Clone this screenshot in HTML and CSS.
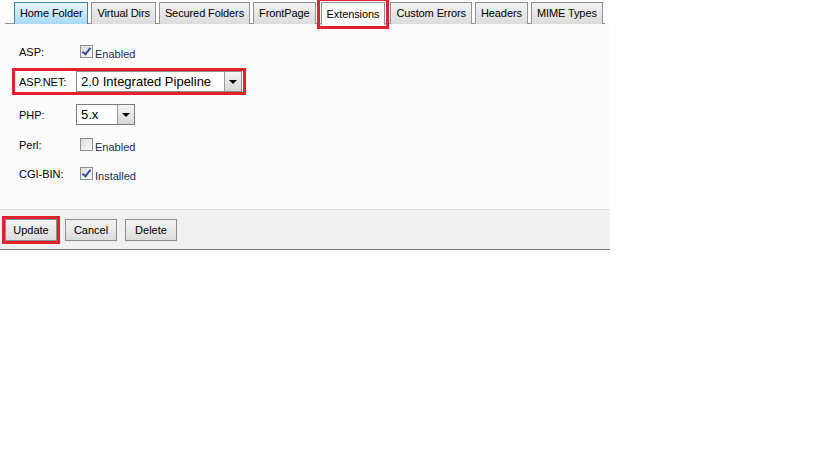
FILE: index.html
```html
<!DOCTYPE html>
<html lang="en">
<head>
    <meta charset="UTF-8">
    <title>Site Extensions</title>
    <link rel="stylesheet" href="styles.css">
</head>
<body>
    <div class="panel">
        <ul class="tabs">
            <li class="tab hover">Home Folder</li>
            <li class="tab">Virtual Dirs</li>
            <li class="tab">Secured Folders</li>
            <li class="tab">FrontPage</li>
            <li class="tab active mark">Extensions</li>
            <li class="tab">Custom Errors</li>
            <li class="tab">Headers</li>
            <li class="tab">MIME Types</li>
        </ul>
        <div class="content">
            <div class="row r-asp">
                <span class="lbl">ASP:</span>
                <label class="chk"><span class="box checked"></span>Enabled</label>
            </div>
            <div class="row r-net mark">
                <span class="lbl">ASP.NET:</span>
                <div class="select wide">
                    <span class="val">2.0 Integrated Pipeline</span>
                    <span class="arrow"></span>
                </div>
            </div>
            <div class="row r-php">
                <span class="lbl">PHP:</span>
                <div class="select narrow">
                    <span class="val">5.x</span>
                    <span class="arrow"></span>
                </div>
            </div>
            <div class="row r-perl">
                <span class="lbl">Perl:</span>
                <label class="chk"><span class="box"></span>Enabled</label>
            </div>
            <div class="row r-cgi">
                <span class="lbl">CGI-BIN:</span>
                <label class="chk"><span class="box checked"></span>Installed</label>
            </div>
        </div>
        <div class="footer">
            <button class="btn mark">Update</button>
            <button class="btn">Cancel</button>
            <button class="btn">Delete</button>
        </div>
    </div>
</body>
</html>
```

FILE: styles.css
```css
body {
    margin: 0;
    background: #ffffff;
    font-family: "Liberation Sans", Arial, sans-serif;
    font-size: 11px;
    color: #000;
}

.panel {
    width: 610px;
}

.tabs {
    list-style: none;
    margin: 0;
    padding: 2px 0 0 14px;
    display: flex;
    gap: 3px;
    position: relative;
    height: 22px;
}

.tabs::after {
    content: "";
    position: absolute;
    left: 5px;
    right: 5px;
    bottom: 0;
    height: 1px;
    background: #919191;
}

.tab {
    box-sizing: border-box;
    height: 22px;
    padding: 0 5px;
    line-height: 20px;
    border: 1px solid #919191;
    border-bottom: none;
    background: linear-gradient(#f2f2f2, #dcdcdc);
    font-size: 11px;
    letter-spacing: -0.1px;
    white-space: nowrap;
    position: relative;
    z-index: 1;
}

.tab.hover {
    border-color: #3c7fb1;
    background: linear-gradient(#eaf6fd, #a7d9f5);
}

.tab.active {
    background: #fcfcfc;
    height: 23px;
    margin: 0 2px;
    padding: 1px 5px 0;
}

.mark {
    outline: 3px solid #e5202e;
    outline-offset: 0;
}

.tab.mark {
    outline-offset: 1px;
}

.content {
    background: #fcfcfc;
    height: 186px;
    padding-top: 20px;
    box-sizing: border-box;
    border-bottom: 1px solid #dcdcdc;
}

.row {
    display: flex;
    align-items: center;
    padding-left: 19px;
}

.lbl {
    width: 57px;
    font-size: 11px;
}

.r-asp { height: 16px; }
.r-net { height: 21px; margin: 11px 0 0 15px; padding-left: 4px; width: 224px; }
.r-php { height: 21px; margin-top: 12px; }
.r-perl { height: 16px; margin-top: 12px; }
.r-cgi { height: 16px; margin-top: 13px; }

.chk {
    display: flex;
    align-items: flex-end;
    font-size: 11px;
    color: #1e2a4a;
    padding-left: 4px;
}

.box {
    box-sizing: border-box;
    width: 13px;
    height: 13px;
    border: 1px solid #8f8f8f;
    background: linear-gradient(135deg, #dcdcdc, #fbfbfb);
    margin-right: 2px;
    margin-bottom: 2px;
    position: relative;
}

.box.checked::after {
    content: "";
    position: absolute;
    left: 3px;
    top: 0px;
    width: 3px;
    height: 7px;
    border-right: 2px solid #34509c;
    border-bottom: 2px solid #34509c;
    transform: rotate(38deg);
}

.select {
    box-sizing: border-box;
    display: flex;
    height: 21px;
    border: 1px solid #7a7a7a;
    background: #fff;
    font-size: 13px;
    align-items: stretch;
}

.select.wide { width: 166px; border-color: #8c8c8c; }
.select.narrow { width: 59px; }

.val {
    flex: 1;
    padding-left: 4px;
    line-height: 19px;
    white-space: nowrap;
}

.arrow {
    width: 16px;
    border-left: 1px solid #9a9a9a;
    background: linear-gradient(#f4f4f4, #d6d6d6);
    position: relative;
}

.arrow::after {
    content: "";
    position: absolute;
    left: 4px;
    top: 8px;
    border-left: 4px solid transparent;
    border-right: 4px solid transparent;
    border-top: 4px solid #000;
}

.footer {
    background: #f0f0f0;
    height: 40px;
    box-sizing: border-box;
    padding: 9px 0 0 5px;
    border-bottom: 1px solid #7a7a7a;
    display: flex;
    gap: 8px;
    align-items: flex-start;
}

.btn {
    box-sizing: border-box;
    height: 22px;
    padding: 0 6px;
    border: 1px solid #8c8c8c;
    border-radius: 0;
    background: linear-gradient(#f4f4f4, #dcdcdc);
    font-family: "Liberation Sans", Arial, sans-serif;
    font-size: 11px;
    color: #000;
    min-width: 52px;
}

.btn.mark {
    outline-offset: 0px;
    width: 51px;
}
```
